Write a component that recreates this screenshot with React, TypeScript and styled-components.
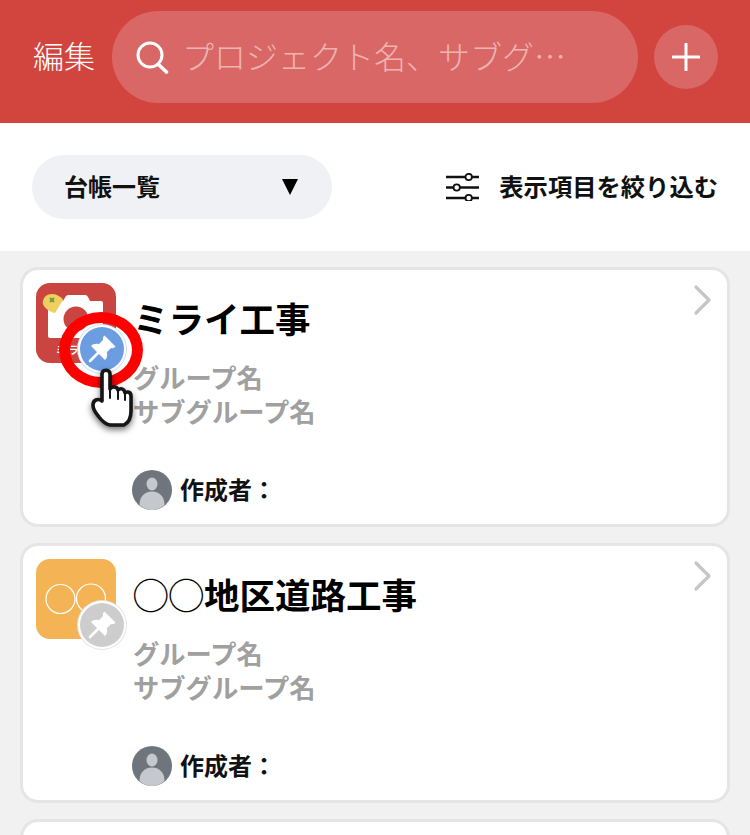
import React from 'react';
import styled, { createGlobalStyle } from 'styled-components';

const GlobalStyle = createGlobalStyle`
	html, body {
		margin: 0;
		padding: 0;
		background: #f1f1f1;
	}
	body {
		font-family: "Noto Sans CJK JP", "Noto Sans", sans-serif;
		overflow: hidden;
	}
	* {
		box-sizing: border-box;
	}
`;

const Page = styled.div`
	width: 750px;
	height: 835px;
	overflow: hidden;
	background: #f1f1f1;
`;

const Header = styled.header`
	height: 123px;
	background: #d2453e;
	display: flex;
	align-items: center;
	padding: 0 32px 9px 33px;
`;

const EditLabel = styled.div`
	width: 79px;
	flex: none;
	padding-bottom: 4px;
	font-size: 31px;
	font-weight: 300;
	color: #fff;
	line-height: 44px;
	white-space: nowrap;
`;

const SearchBox = styled.div`
	width: 526px;
	height: 92px;
	flex: none;
	border-radius: 46px;
	background: #d96765;
	display: flex;
	align-items: center;
	padding: 0 40px 0 24px;
	gap: 12px;
`;

const SearchText = styled.div`
	padding-bottom: 4px;
	font-size: 32px;
	font-weight: 300;
	color: #eeb4b2;
	white-space: nowrap;
`;

const AddButton = styled.div`
	width: 64px;
	height: 64px;
	flex: none;
	margin-left: 16px;
	border-radius: 50%;
	background: #d96765;
	display: flex;
	align-items: center;
	justify-content: center;
`;

const FilterBar = styled.div`
	height: 128px;
	background: #fff;
	display: flex;
	align-items: center;
	justify-content: space-between;
	padding: 0 32px;
`;

const Select = styled.div`
	width: 300px;
	height: 64px;
	border-radius: 32px;
	background: #f0f1f5;
	display: flex;
	align-items: center;
	justify-content: space-between;
	padding: 0 34px 0 32px;
	font-size: 24px;
	font-weight: 700;
	color: #111;
`;

const Label = styled.span`
	padding-bottom: 4px;
`;

const Arrow = styled.span`
	width: 0;
	height: 0;
	border-left: 8px solid transparent;
	border-right: 8px solid transparent;
	border-top: 16px solid #000;
`;

const FilterLink = styled.div`
	display: flex;
	align-items: center;
	gap: 20px;
	font-size: 24.3px;
	font-weight: 700;
	color: #111;
`;

const List = styled.div`
	padding: 16px 20px 0;
	display: flex;
	flex-direction: column;
	gap: 16px;
`;

const Card = styled.article`
	position: relative;
	height: 260px;
	width: 710px;
	flex: none;
	background: #fff;
	border: 3px solid #e5e5e5;
	border-radius: 18px;
	display: flex;
	padding: 13px 13px 0;
	gap: 17px;
`;

const ThumbWrap = styled.div`
	position: relative;
	width: 80px;
	height: 80px;
	flex: none;
`;

const Thumb = styled.svg`
	display: block;
	width: 80px;
	height: 80px;
`;

const PinBadge = styled.div<{ $active?: boolean }>`
	position: absolute;
	left: 44px;
	top: 44px;
	width: 44px;
	height: 44px;
	border-radius: 50%;
	background: ${(p) => (p.$active ? '#6b9de0' : '#cdcdcd')};
	box-shadow: 0 0 0 2px #fff, 0 0 0 3px ${(p) => (p.$active ? '#cfdff5' : '#e4e4e4')};
	display: flex;
	align-items: center;
	justify-content: center;
`;

const Ring = styled.div`
	position: absolute;
	left: 23px;
	top: 29px;
	width: 84px;
	height: 76px;
	border-radius: 50%;
	border: 11px solid #fd0000;
`;

const Hand = styled.svg`
	position: absolute;
	left: 54px;
	top: 84px;
	width: 46px;
	height: 62px;
	overflow: visible;
`;

const Body = styled.div`
	flex: 1;
	min-width: 0;
	display: flex;
	flex-direction: column;
`;

const Title = styled.h2`
	margin: 0;
	padding-top: 10px;
	font-size: 35.5px;
	line-height: 50px;
	font-weight: 700;
	color: #000;
	white-space: nowrap;
`;

const GroupText = styled.div`
	margin-top: 17px;
	font-size: 26.3px;
	line-height: 34px;
	font-weight: 700;
	color: #a0a0a0;
`;

const Author = styled.div`
	margin-top: 42px;
	margin-left: -1px;
	display: flex;
	align-items: center;
	gap: 8px;
	font-size: 24px;
	font-weight: 700;
	color: #111;
`;

const Avatar = styled.svg`
	width: 40px;
	height: 40px;
	flex: none;
`;

const Chevron = styled.svg`
	position: absolute;
	right: 14px;
	top: 14px;
	width: 20px;
	height: 32px;
`;

const PinIcon = () => (
	<svg width="30" height="30" viewBox="0 0 30 30">
		<path d="M17.5 1.5 L28.5 12.5 C27.5 14 25.5 14.5 24 14 L19.8 18.2 C20.8 21 20 24 18 26 L4 12 C6 10 9 9.2 11.8 10.2 L16 6 C15.5 4.5 16 2.5 17.5 1.5 Z" fill="#fff" />
		<path d="M11 19 L3 27" stroke="#fff" strokeWidth="2.6" strokeLinecap="round" />
	</svg>
);

const UserAvatar = () => (
	<Avatar viewBox="0 0 40 40">
		<circle cx="20" cy="20" r="20" fill="#6f757d" />
		<ellipse cx="20" cy="14" rx="5.5" ry="6.5" fill="#c5c8cc" />
		<path d="M7.5 35 C7.5 26 13 21.5 20 21.5 C27 21.5 32.5 26 32.5 35 C29 38.4 24.6 40 20 40 C15.4 40 11 38.4 7.5 35 Z" fill="#c5c8cc" />
	</Avatar>
);

const ChevronIcon = () => (
	<Chevron viewBox="0 0 20 32">
		<path d="M3 3 L16 16 L3 29" fill="none" stroke="#c6c6c6" strokeWidth="3.2" strokeLinecap="round" strokeLinejoin="round" />
	</Chevron>
);

const CameraThumb = () => (
	<Thumb viewBox="0 0 80 80">
		<rect width="80" height="80" rx="14" fill="#cb4540" />
		<path d="M14 18 H27 L30 13 Q31 12 33 12 H49 Q51 12 52 14 L54 18 H65 Q67 18 67 20 V53 Q67 55 65 55 H14 Q12 55 12 53 V20 Q12 18 14 18 Z" fill="#fff" />
		<circle cx="40" cy="36" r="12.5" fill="#cb4540" />
		<path d="M6.7 20 C7 14 11 11 16 11 C20 11 24 13 27.3 16.7 L19 30 C14 29 7.5 25 6.7 20 Z" fill="#efcf5f" />
		<path d="M14 15 L18 19 M18 15 L14 19" stroke="#6d9a3c" strokeWidth="1.8" />
		<text x="39" y="71" textAnchor="middle" fontSize="10" fontWeight="700" letterSpacing="3" fill="#fff">ミライ</text>
	</Thumb>
);

const CircleThumb = () => (
	<Thumb viewBox="0 0 80 80">
		<rect width="80" height="80" rx="14" fill="#f4b455" />
		<circle cx="24.5" cy="40" r="14.5" fill="none" stroke="#fff" strokeWidth="1.2" />
		<circle cx="55" cy="39.5" r="14.5" fill="none" stroke="#fff" strokeWidth="1.2" />
	</Thumb>
);

const PointerHand = () => (
	<Hand viewBox="0 0 46 62">
		<defs>
			<filter id="handShadow" x="-40%" y="-30%" width="180%" height="170%">
				<feDropShadow dx="0" dy="3" stdDeviation="3" floodColor="#000" floodOpacity="0.55" />
			</filter>
		</defs>
		<path
			d="M12 34 V7 C12 2 20 2 20 7 V22 C22 19 27 19 28 23 C30 21 34 21 35 26 C37 24 41 25 41 29 V44 C41 51 38 56 34 58 H20 C15 57 12 54 9 50 C7 47 3 44 3 38 C3 33 8 31 12 34 Z"
			fill="#fff"
			stroke="#151515"
			strokeWidth="3.6"
			strokeLinejoin="round"
			filter="url(#handShadow)"
		/>
		<path d="M20 22 V31 M28 23 V32 M35 26 V33" stroke="#151515" strokeWidth="2" strokeLinecap="round" />
	</Hand>
);

type ProjectCardProps = {
	title: string;
	thumb: React.ReactNode;
	active?: boolean;
};

const ProjectCard = (props: ProjectCardProps) => {
	return (
		<Card>
			<ThumbWrap>
				{props.thumb}
				<PinBadge $active={props.active}>
					<PinIcon />
				</PinBadge>
				{props.active && <Ring />}
				{props.active && <PointerHand />}
			</ThumbWrap>
			<Body>
				<Title>{props.title}</Title>
				<GroupText>
					グループ名
					<br />
					サブグループ名
				</GroupText>
				<Author>
					<UserAvatar />
					<Label>作成者：</Label>
				</Author>
			</Body>
			<ChevronIcon />
		</Card>
	);
};

const App = () => {
	return (
		<Page>
			<GlobalStyle />
			<Header>
				<EditLabel>編集</EditLabel>
				<SearchBox>
					<svg width="34" height="34" viewBox="0 0 34 34" style={{ flex: 'none' }}>
						<circle cx="14" cy="15" r="12" fill="none" stroke="#fff" strokeWidth="3" />
						<path d="M23 25 L30.5 32" stroke="#fff" strokeWidth="3.6" strokeLinecap="round" />
					</svg>
					<SearchText>プロジェクト名、サブグ…</SearchText>
				</SearchBox>
				<AddButton>
					<svg width="28" height="28" viewBox="0 0 28 28">
						<path d="M14 1 V27 M1 14 H27" stroke="#fff" strokeWidth="3" strokeLinecap="round" />
					</svg>
				</AddButton>
			</Header>
			<FilterBar>
				<Select>
					<Label>台帳一覧</Label>
					<Arrow />
				</Select>
				<FilterLink>
					<svg width="33" height="28" viewBox="0 0 33 28">
						<path d="M0 4 H19.5 M26 4 H33 M0 14.5 H7.5 M14 14.5 H33 M0 25 H19.5 M26 25 H33" stroke="#111" strokeWidth="2.4" />
						<circle cx="22.7" cy="4" r="3.2" fill="none" stroke="#111" strokeWidth="1.8" />
						<circle cx="10.7" cy="14.5" r="3.2" fill="none" stroke="#111" strokeWidth="1.8" />
						<circle cx="22.7" cy="25" r="3.2" fill="none" stroke="#111" strokeWidth="1.8" />
					</svg>
					<Label>表示項目を絞り込む</Label>
				</FilterLink>
			</FilterBar>
			<List>
				<ProjectCard title="ミライ工事" thumb={<CameraThumb />} active />
				<ProjectCard title="◯◯地区道路工事" thumb={<CircleThumb />} />
				<Card />
			</List>
		</Page>
	);
};

export default App;
